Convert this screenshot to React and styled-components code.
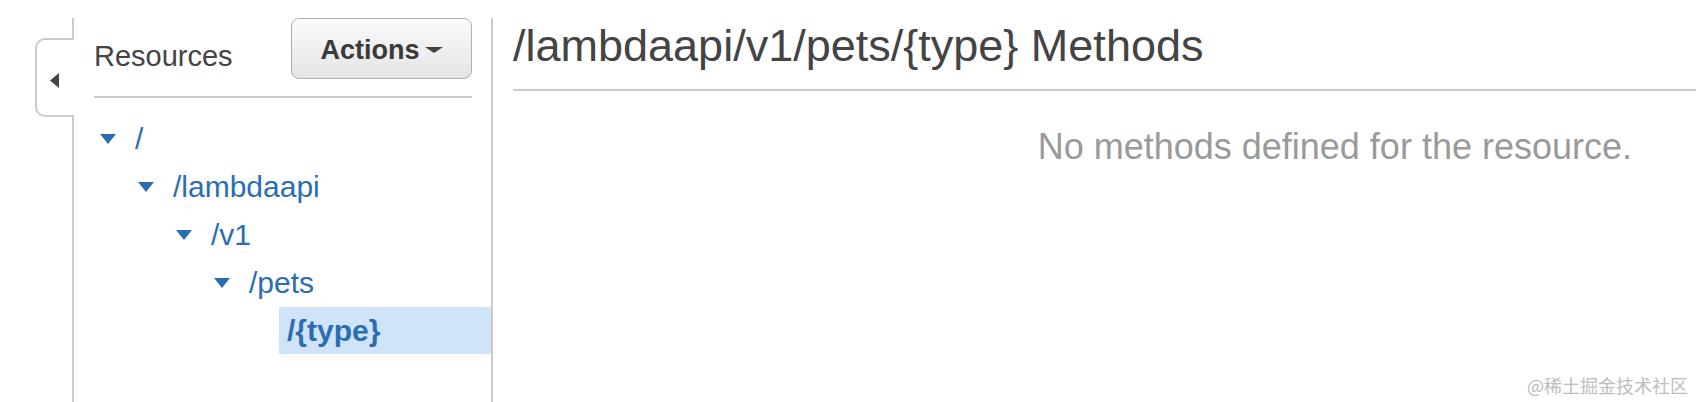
import React from "react";
import styled, { createGlobalStyle } from "styled-components";

const GlobalStyle = createGlobalStyle`
  html, body { margin: 0; padding: 0; background: #fff; }
  body { font-family: "Liberation Sans", Arial, sans-serif; }
  * { box-sizing: border-box; }
`;

const LINE = "#cbcbcb";
const BLUE = "#2b6db4";

const Page = styled.div`
  position: relative;
  display: flex;
  height: 402px;
  padding-top: 18px;
  padding-left: 35px;
  overflow: hidden;
`;

const Rail = styled.div`
  display: flex;
  flex-direction: column;
  width: 39px;
  flex: none;
`;

const RailLine = styled.div`
  border-right: 2px solid ${LINE};
  height: ${(p) => (p.$grow ? "auto" : `${p.$h}px`)};
  flex: ${(p) => (p.$grow ? 1 : "none")};
`;

const CollapseTab = styled.div`
  height: 79px;
  border: 2px solid ${LINE};
  border-right: none;
  border-radius: 10px 0 0 10px;
  display: flex;
  align-items: center;
  padding-left: 13px;
  padding-top: 5px;
`;

const Panel = styled.div`
  width: 419px;
  flex: none;
  border-right: 2px solid ${LINE};
  display: flex;
  flex-direction: column;
`;

const PanelHeader = styled.div`
  display: flex;
  justify-content: space-between;
  align-items: flex-start;
  margin: 0 19px 0 20px;
  padding-bottom: 17px;
  border-bottom: 2px solid ${LINE};
`;

const PanelTitle = styled.div`
  margin-top: 22px;
  font-size: 29px;
  line-height: 33px;
  color: #444;
`;

const ActionsButton = styled.button`
  width: 181px;
  height: 61px;
  border: 1px solid #b0b0b0;
  border-radius: 8px;
  background: linear-gradient(#fbfbfb, #e4e4e4);
  box-shadow: inset 0 1px 0 #fff;
  display: flex;
  align-items: center;
  justify-content: center;
  gap: 5px;
  padding: 3px 0 0 0;
  font-family: "Liberation Sans", Arial, sans-serif;
  font-weight: bold;
  font-size: 27px;
  line-height: 1;
  color: #3a3a3a;
  cursor: pointer;
`;

const Tree = styled.ul`
  list-style: none;
  margin: 0;
  padding: 17px 0 0 0;
`;

const Row = styled.li`
  display: flex;
  align-items: center;
  height: 48px;
  padding-left: ${(p) => 26 + p.$level * 38}px;
`;

const Toggle = styled.span`
  width: 16px;
  height: 10px;
  flex: none;
  display: flex;
  margin-right: 11px;
`;

const Label = styled.span`
  display: flex;
  align-items: center;
  height: ${(p) => (p.$selected ? "47px" : "48px")};
  padding: 0 8px;
  font-size: 30px;
  color: ${BLUE};
  font-weight: ${(p) => (p.$selected ? "bold" : "normal")};
  background: ${(p) => (p.$selected ? "#cfe4f8" : "transparent")};
  flex: ${(p) => (p.$selected ? 1 : "none")};
  margin-bottom: ${(p) => (p.$selected ? "1px" : "0")};
`;

const Main = styled.div`
  flex: 1;
  display: flex;
  flex-direction: column;
`;

const MainTitle = styled.h1`
  margin: 0 0 0 20px;
  padding: 2px 0 17px 0;
  border-bottom: 2px solid ${LINE};
  font-size: 45px;
  line-height: 52px;
  font-weight: normal;
  color: #444;
`;

const EmptyText = styled.p`
  margin: 35px 0 0 0;
  padding-right: 64px;
  text-align: right;
  font-size: 36px;
  line-height: 42px;
  color: #9a9a9a;
`;

const Watermark = styled.div`
  position: absolute;
  right: 8px;
  bottom: 8px;
  font-family: "Noto Sans CJK SC", "Liberation Sans", sans-serif;
  font-size: 18px;
  line-height: 18px;
  color: #bdbdbd;
`;

const DownTriangle = ({ color = BLUE, w = 16, h = 10 }) => (
  <svg width={w} height={h} viewBox={`0 0 ${w} ${h}`}>
    <polygon points={`0,0 ${w},0 ${w / 2},${h}`} fill={color} />
  </svg>
);

const LeftArrow = () => (
  <svg width="9" height="15" viewBox="0 0 9 15">
    <polygon points="9,0 9,15 0,7.5" fill="#444" />
  </svg>
);

const items = [
  { label: "/", level: 0 },
  { label: "/lambdaapi", level: 1 },
  { label: "/v1", level: 2 },
  { label: "/pets", level: 3 },
  { label: "/{type}", level: 4, leaf: true, selected: true },
];

export default function App() {
  return (
    <>
      <GlobalStyle />
      <Page>
        <Rail>
          <RailLine $h={20} />
          <CollapseTab>
            <LeftArrow />
          </CollapseTab>
          <RailLine $grow />
        </Rail>
        <Panel>
          <PanelHeader>
            <PanelTitle>Resources</PanelTitle>
            <ActionsButton>
              Actions
              <DownTriangle color="#444" w={18} h={6} />
            </ActionsButton>
          </PanelHeader>
          <Tree>
            {items.map((it) => (
              <Row key={it.label} $level={it.level}>
                <Toggle>{!it.leaf && <DownTriangle />}</Toggle>
                <Label $selected={it.selected}>{it.label}</Label>
              </Row>
            ))}
          </Tree>
        </Panel>
        <Main>
          <MainTitle>/lambdaapi/v1/pets/{"{type}"} Methods</MainTitle>
          <EmptyText>No methods defined for the resource.</EmptyText>
        </Main>
        <Watermark>@稀土掘金技术社区</Watermark>
      </Page>
    </>
  );
}
